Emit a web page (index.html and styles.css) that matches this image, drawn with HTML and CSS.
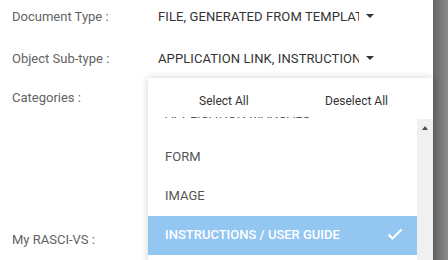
FILE: index.html
```html
<!DOCTYPE html>
<html lang="en">
<head>
  <meta charset="UTF-8">
  <title>Document properties</title>
  <link rel="stylesheet" href="styles.css">
</head>
<body>
  <div class="page">
    <div class="form">
      <div class="row">
        <div class="label">Document Type :</div>
        <div class="select">
          <span class="value">FILE, GENERATED FROM TEMPLATE</span>
          <span class="caret"></span>
        </div>
      </div>
      <div class="row">
        <div class="label">Object Sub-type :</div>
        <div class="select">
          <span class="value">APPLICATION LINK, INSTRUCTIONS / USER GUIDE</span>
          <span class="caret"></span>
        </div>
      </div>
      <div class="row row-tall">
        <div class="label">Categories :</div>
      </div>
      <div class="row">
        <div class="label">My RASCI-VS :</div>
      </div>

      <div class="dropdown">
        <div class="dropdown-head">
          <span class="head-btn">Select All</span>
          <span class="head-btn">Deselect All</span>
        </div>
        <div class="dropdown-body">
          <ul class="options">
            <li class="option">APPLICATION MANUALS</li>
            <li class="option">FORM</li>
            <li class="option">IMAGE</li>
            <li class="option selected">
              <span>INSTRUCTIONS / USER GUIDE</span>
              <svg class="check" width="16" height="12" viewBox="0 0 16 12">
                <polyline points="1.5,6.5 5.5,10.5 14.5,1.5" fill="none" stroke="#fff" stroke-width="2"/>
              </svg>
            </li>
            <li class="option">LETTER</li>
          </ul>
          <div class="scrollbar">
            <span class="arrow-up"></span>
          </div>
        </div>
      </div>
    </div>
    <div class="backdrop"></div>
  </div>
</body>
</html>
```

FILE: styles.css
```css
* {
  margin: 0;
  padding: 0;
  box-sizing: border-box;
}

html, body {
  width: 100%;
  height: 100%;
  overflow: hidden;
  background-color: #fff;
  font-family: Roboto, "Liberation Sans", sans-serif;
  font-size: 13px;
}

.page {
  display: flex;
  height: 260px;
}

.form {
  position: relative;
  flex: 1;
  padding-left: 12px;
}

.row {
  display: flex;
  align-items: center;
  height: 32px;
}

.row + .row {
  margin-top: 10px;
}

.row-tall {
  align-items: flex-start;
  height: 141px;
  line-height: 32px;
}

.row + .row-tall {
  margin-top: 8px;
}

.row-tall + .row {
  margin-top: 0;
}

.label {
  width: 146px;
  color: #636363;
}

.select {
  display: flex;
  align-items: center;
  color: #333;
}

.value {
  width: 201px;
  overflow: hidden;
  white-space: nowrap;
  letter-spacing: 0.1px;
}

.caret {
  margin-left: 7px;
  width: 0;
  height: 0;
  border-left: 4px solid transparent;
  border-right: 4px solid transparent;
  border-top: 4px solid #333;
}

/* open category list */
.dropdown {
  position: absolute;
  left: 148px;
  top: 78px;
  width: 285px;
  height: 190px;
  background-color: #fff;
  box-shadow: 0 0 8px rgba(0, 0, 0, 0.18);
  display: flex;
  flex-direction: column;
}

.dropdown-head {
  display: flex;
  justify-content: space-between;
  align-items: center;
  height: 39px;
  padding: 6px 45px 0 51px;
  font-size: 12px;
  color: #333;
}

.dropdown-body {
  flex: 1;
  display: flex;
  overflow: hidden;
}

.options {
  flex: 1;
  list-style: none;
  margin-top: -18px;
}

.option {
  display: flex;
  align-items: center;
  justify-content: space-between;
  height: 39px;
  padding: 0 14px 3px 17px;
  color: #555;
  white-space: nowrap;
}

.option:first-child {
  padding-bottom: 11px;
}

.option.selected {
  background-color: #93c6f1;
  color: #fff;
  font-weight: 500;
}

.check {
  display: block;
}

.scrollbar {
  width: 16px;
  margin-top: 2px;
  background-color: #f0f0f0;
  display: flex;
  justify-content: center;
  padding-top: 7px;
}

.arrow-up {
  width: 0;
  height: 0;
  border-left: 3.5px solid transparent;
  border-right: 3.5px solid transparent;
  border-bottom: 4px solid #505050;
}

.backdrop {
  width: 15px;
  background: linear-gradient(to right, #666, #8a8a8a);
}
```
